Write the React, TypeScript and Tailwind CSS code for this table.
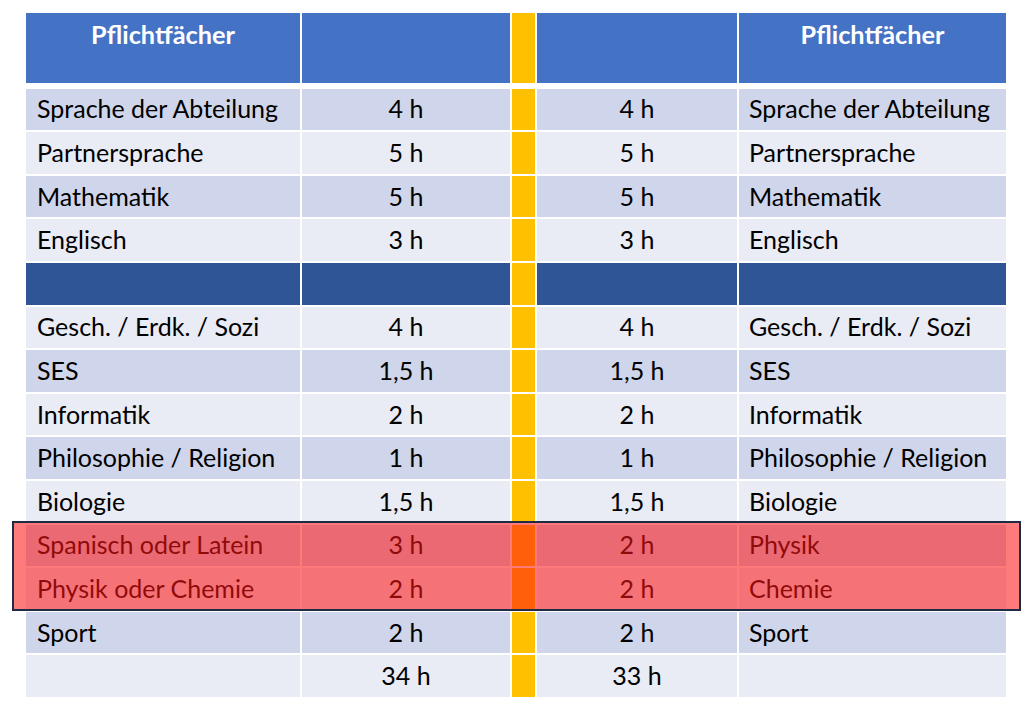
import React from 'react';

type Row = { left: string; a: string; b: string; right: string };

const top: Row[] = [
  { left: 'Sprache der Abteilung', a: '4 h', b: '4 h', right: 'Sprache der Abteilung' },
  { left: 'Partnersprache', a: '5 h', b: '5 h', right: 'Partnersprache' },
  { left: 'Mathematik', a: '5 h', b: '5 h', right: 'Mathematik' },
  { left: 'Englisch', a: '3 h', b: '3 h', right: 'Englisch' },
];

const bottom: Row[] = [
  { left: 'Gesch. / Erdk. / Sozi', a: '4 h', b: '4 h', right: 'Gesch. / Erdk. / Sozi' },
  { left: 'SES', a: '1,5 h', b: '1,5 h', right: 'SES' },
  { left: 'Informatik', a: '2 h', b: '2 h', right: 'Informatik' },
  { left: 'Philosophie / Religion', a: '1 h', b: '1 h', right: 'Philosophie / Religion' },
  { left: 'Biologie', a: '1,5 h', b: '1,5 h', right: 'Biologie' },
  { left: 'Spanisch oder Latein', a: '3 h', b: '2 h', right: 'Physik' },
  { left: 'Physik oder Chemie', a: '2 h', b: '2 h', right: 'Chemie' },
  { left: 'Sport', a: '2 h', b: '2 h', right: 'Sport' },
  { left: '', a: '34 h', b: '33 h', right: '' },
];

const grid = 'grid grid-cols-[274px_208px_23px_200px_267px] gap-x-[2px]';

function BodyRow({ row, dark }: { row: Row; dark: boolean }) {
  const bg = dark ? 'bg-[#cfd5ea]' : 'bg-[#e9ebf5]';
  return (
    <div className={`${grid} h-[41.6px] text-[25px] leading-[1.2] text-black`}>
      <div className={`${bg} flex items-center pl-[11px] pb-[2px]`}>{row.left}</div>
      <div className={`${bg} flex items-center justify-center pb-[2px]`}>{row.a}</div>
      <div className="bg-[#ffc000]" />
      <div className={`${bg} flex items-center justify-center pb-[2px]`}>{row.b}</div>
      <div className={`${bg} flex items-center pl-[10px] pb-[2px]`}>{row.right}</div>
    </div>
  );
}

export default function App() {
  return (
    <div
      className="relative w-[1036px] h-[703px] bg-white overflow-hidden"
      style={{ fontFamily: 'Lato, "Open Sans", sans-serif' }}
    >
      <div className="pt-[13px] pl-[26px] flex flex-col">
        {/* header */}
        <div className={`${grid} h-[70px] text-[25.3px] leading-[1.2] font-bold text-white`}>
          <div className="bg-[#4472c4] text-center pt-[6px]">Pflichtfächer</div>
          <div className="bg-[#4472c4]" />
          <div className="bg-[#ffc000]" />
          <div className="bg-[#4472c4]" />
          <div className="bg-[#4472c4] text-center pt-[6px]">Pflichtfächer</div>
        </div>

        <div className="mt-[5.7px] flex flex-col gap-y-[2px]">
          {top.map((r, i) => (
            <BodyRow key={r.left} row={r} dark={i % 2 === 0} />
          ))}

          <div className={`${grid} h-[41.6px]`}>
            <div className="bg-[#2f5597]" />
            <div className="bg-[#2f5597]" />
            <div className="bg-[#ffc000]" />
            <div className="bg-[#2f5597]" />
            <div className="bg-[#2f5597]" />
          </div>

          {bottom.map((r, i) => (
            <BodyRow key={r.left + i} row={r} dark={i % 2 === 1} />
          ))}
        </div>
      </div>

      {/* highlight box over the two elective rows */}
      <div className="absolute left-[12px] top-[520.7px] w-[1009px] h-[90.3px] border-2 border-[#1f2a44] bg-[rgba(255,20,20,0.56)]" />
    </div>
  );
}
